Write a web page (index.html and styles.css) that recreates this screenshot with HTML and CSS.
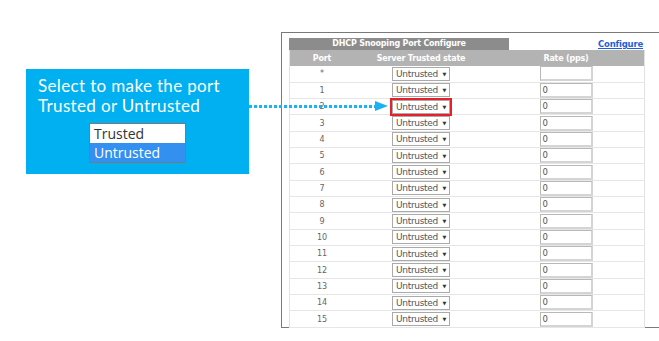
FILE: index.html
```html
<!DOCTYPE html>
<html lang="en">
<head>
    <meta charset="UTF-8">
    <title>DHCP Snooping Port Configure</title>
    <link rel="stylesheet" href="styles.css">
</head>
<body>
    <div class="stage">
        <!-- callout on the left -->
        <div class="callout">
            <p class="line">Select to make the port</p>
            <p class="line">Trusted or Untrusted</p>
            <ul class="options">
                <li>Trusted</li>
                <li class="picked">Untrusted</li>
            </ul>
        </div>

        <div class="arrow"><span class="arrow-head"></span></div>

        <!-- config window -->
        <div class="window">
            <div class="title-row">
                <div class="title">DHCP Snooping Port Configure</div>
                <a class="configure" href="#">Configure</a>
            </div>
            <table class="ports">
                <thead>
                    <tr><th class="c-port">Port</th><th class="c-state">Server Trusted state</th><th class="c-rate">Rate (pps)</th></tr>
                </thead>
                <tbody id="rows"></tbody>
            </table>
        </div>
    </div>

    <script>
        const rows = document.getElementById('rows');
        const ports = ['*', 1, 2, 3, 4, 5, 6, 7, 8, 9, 10, 11, 12, 13, 14, 15];
        ports.forEach(p => {
            const tr = document.createElement('tr');
            const mark = p === 2 ? ' marked' : '';
            const rate = p === '*' ? '' : '0';
            tr.innerHTML = `
                <td class="c-port">${p}</td>
                <td class="c-state"><span class="select${mark}">Untrusted<span class="caret">&#9660;</span></span></td>
                <td class="c-rate"><span class="rate">${rate}</span></td>`;
            rows.appendChild(tr);
        });
    </script>
</body>
</html>
```

FILE: styles.css
```css
html, body { margin: 0; padding: 0; background: #fff; overflow: hidden; }
body { width: 659px; height: 341px; font-family: "Open Sans", "Liberation Sans", sans-serif; }

.stage { position: relative; display: flex; align-items: flex-start; padding-left: 26px; height: 341px; box-sizing: border-box; }

.callout { width: 223px; height: 105px; margin-top: 69px; background: #00b0f0; color: #fff; box-sizing: border-box; padding: 7px 0 0 12px; flex: none; }
.callout .line { margin: 0; height: 20px; font-family: Lato, "Open Sans", sans-serif; font-size: 17px; line-height: 20px; letter-spacing: 0.35px; white-space: nowrap; }
.options { list-style: none; margin: 7px 0 0 51px; padding: 0; width: 95px; border: 1px solid #7a7a7a; background: #fff; }
.options li { height: 19px; line-height: 19px; font-size: 14px; color: #333; padding-left: 4px; }
.options li.picked { background: #3390f0; color: #fff; }

.arrow { position: absolute; left: 249px; top: 105px; width: 126px; height: 3px; background: repeating-linear-gradient(90deg, #1ab2f2 0 3px, transparent 3px 5px); }
.arrow-head { position: absolute; right: -13px; top: -4px; width: 0; height: 0; border-top: 5px solid transparent; border-bottom: 5px solid transparent; border-left: 13px solid #1ab2f2; }

.window { flex: 1; margin: 32px 0 0 32px; height: 296px; border: 1px solid #7a7a7a; border-right: none; padding: 5px 0 0 7px; box-sizing: border-box; font-family: "DejaVu Sans", sans-serif; }

.title-row { display: flex; justify-content: space-between; align-items: flex-end; width: 354px; height: 12px; }
.title { width: 220px; height: 12px; background: #8c8c8c; color: #fff; font-size: 8px; font-weight: bold; text-align: center; line-height: 12px; letter-spacing: -0.2px; }
.configure { color: #1f5fd8; font-size: 8.5px; font-weight: bold; line-height: 10px; margin-bottom: 1px; letter-spacing: -0.2px; }

.ports { width: 354px; border-collapse: collapse; table-layout: fixed; border-left: 1px solid #e2e2e2; border-right: 1px solid #e2e2e2; }
.ports th { height: 16px; padding: 0; background: #b3b3b3; color: #fff; font-size: 8px; font-weight: bold; letter-spacing: -0.2px; }
.ports td { height: 16.33px; padding: 0; border-bottom: 1px solid #e6e6e6; box-sizing: border-box; text-align: center; color: #666; font-size: 8px; }
.c-port { width: 64px; }
.c-state { width: 134px; }
.c-rate { width: 156px; }

.select { display: inline-flex; align-items: center; justify-content: space-between; width: 58px; height: 14px; box-sizing: border-box; border: 1px solid #aaa; padding: 0 3px 0 3px; font-size: 9px; color: #555; vertical-align: middle; text-align: left; letter-spacing: -0.3px; }
.select .caret { font-size: 5px; color: #333; }
.select.marked { outline: 2px solid #e8202a; outline-offset: 0; }

.rate { display: inline-block; width: 53px; height: 15px; box-sizing: border-box; border: 1px solid #b8b8b8; border-right: 2px solid #d4d4d4; border-bottom: 2px solid #d4d4d4; text-align: left; padding-left: 2px; line-height: 12px; font-size: 8.5px; color: #555; vertical-align: middle; }
```
